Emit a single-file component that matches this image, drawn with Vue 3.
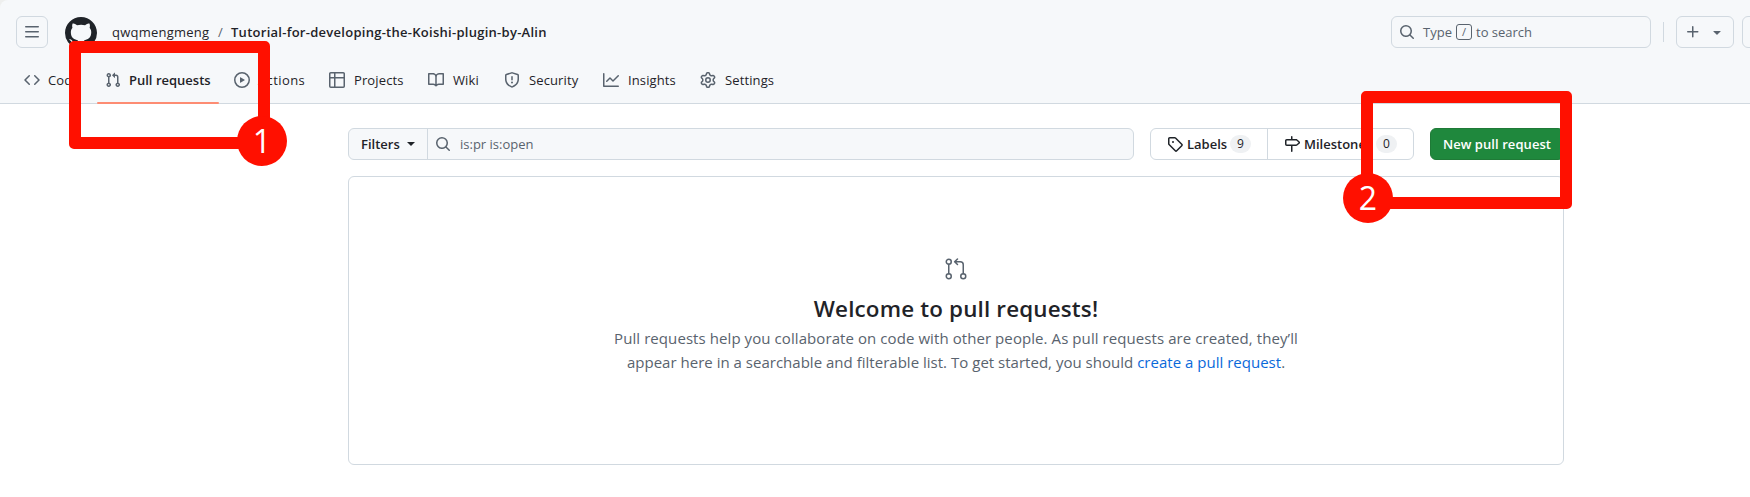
<script setup>
const tabs = [
  { key: 'code', label: 'Code' },
  { key: 'pulls', label: 'Pull requests', active: true },
  { key: 'actions', label: 'Actions' },
  { key: 'projects', label: 'Projects' },
  { key: 'wiki', label: 'Wiki' },
  { key: 'security', label: 'Security' },
  { key: 'insights', label: 'Insights' },
  { key: 'settings', label: 'Settings' },
]

const icons = {
  code: 'm11.28 3.22 4.25 4.25a.75.75 0 0 1 0 1.06l-4.25 4.25a.749.749 0 0 1-1.275-.326.749.749 0 0 1 .215-.734L13.94 8l-3.72-3.72a.749.749 0 0 1 .326-1.275.749.749 0 0 1 .734.215Zm-6.56 0a.751.751 0 0 1 1.042.018.751.751 0 0 1 .018 1.042L2.06 8l3.72 3.72a.749.749 0 0 1-.326 1.275.749.749 0 0 1-.734-.215L.47 8.53a.75.75 0 0 1 0-1.06Z',
  pulls: 'M1.5 3.25a2.25 2.25 0 1 1 3 2.122v5.256a2.251 2.251 0 1 1-1.5 0V5.372A2.25 2.25 0 0 1 1.5 3.25Zm5.677-.177L9.573.677A.25.25 0 0 1 10 .854V2.5h1A2.5 2.5 0 0 1 13.5 5v5.628a2.251 2.251 0 1 1-1.5 0V5a1 1 0 0 0-1-1h-1v1.646a.25.25 0 0 1-.427.177L7.177 3.427a.25.25 0 0 1 0-.354ZM3.75 2.5a.75.75 0 1 0 0 1.5.75.75 0 0 0 0-1.5Zm0 9.5a.75.75 0 1 0 0 1.5.75.75 0 0 0 0-1.5Zm8.25.75a.75.75 0 1 0 1.5 0 .75.75 0 0 0-1.5 0Z',
  actions: 'M8 0a8 8 0 1 1 0 16A8 8 0 0 1 8 0ZM1.5 8a6.5 6.5 0 1 0 13 0 6.5 6.5 0 0 0-13 0Zm4.879-2.773 4.264 2.559a.25.25 0 0 1 0 .428l-4.264 2.559A.25.25 0 0 1 6 10.559V5.442a.25.25 0 0 1 .379-.215Z',
  projects: 'M0 1.75C0 .784.784 0 1.75 0h12.5C15.216 0 16 .784 16 1.75v12.5A1.75 1.75 0 0 1 14.25 16H1.75A1.75 1.75 0 0 1 0 14.25ZM6.5 6.5v8h7.75a.25.25 0 0 0 .25-.25V6.5Zm8-1.5V1.75a.25.25 0 0 0-.25-.25H6.5V5Zm-13 1.5v7.75c0 .138.112.25.25.25H5v-8ZM5 5V1.5H1.75a.25.25 0 0 0-.25.25V5Z',
  wiki: 'M0 1.75A.75.75 0 0 1 .75 1h4.253c1.227 0 2.317.59 3 1.501A3.743 3.743 0 0 1 11.006 1h4.245a.75.75 0 0 1 .75.75v10.5a.75.75 0 0 1-.75.75h-4.507a2.25 2.25 0 0 0-1.591.659l-.622.621a.75.75 0 0 1-1.06 0l-.622-.621A2.25 2.25 0 0 0 5.258 13H.75a.75.75 0 0 1-.75-.75Zm7.251 10.324.004-5.073-.002-2.253A2.25 2.25 0 0 0 5.003 2.5H1.5v9h3.757a3.75 3.75 0 0 1 1.994.574ZM8.755 4.75l-.004 7.322a3.752 3.752 0 0 1 1.992-.572H14.5v-9h-3.495a2.25 2.25 0 0 0-2.25 2.25Z',
  security: 'M7.467.133a1.748 1.748 0 0 1 1.066 0l5.25 1.68A1.75 1.75 0 0 1 15 3.48V7c0 1.566-.32 3.182-1.303 4.682-.983 1.498-2.585 2.813-5.032 3.855a1.697 1.697 0 0 1-1.33 0c-2.447-1.042-4.049-2.357-5.032-3.855C1.32 10.182 1 8.566 1 7V3.48a1.75 1.75 0 0 1 1.217-1.667Zm.61 1.429a.25.25 0 0 0-.153 0l-5.25 1.68a.25.25 0 0 0-.174.238V7c0 1.358.275 2.666 1.057 3.86.784 1.194 2.121 2.34 4.366 3.297a.196.196 0 0 0 .154 0c2.245-.956 3.582-2.104 4.366-3.298C13.225 9.666 13.5 8.36 13.5 7V3.48a.251.251 0 0 0-.174-.237l-5.25-1.68ZM8.75 4.75v3a.75.75 0 0 1-1.5 0v-3a.75.75 0 0 1 1.5 0ZM9 10.5a1 1 0 1 1-2 0 1 1 0 0 1 2 0Z',
  insights: 'M1.5 1.75V13.5h13.75a.75.75 0 0 1 0 1.5H.75a.75.75 0 0 1-.75-.75V1.75a.75.75 0 0 1 1.5 0Zm14.28 2.53-5.25 5.25a.75.75 0 0 1-1.06 0L7 7.06 4.28 9.78a.751.751 0 0 1-1.042-.018.751.751 0 0 1-.018-1.042l3.25-3.25a.75.75 0 0 1 1.06 0L10 7.94l4.72-4.72a.751.751 0 0 1 1.042.018.751.751 0 0 1 .018 1.042Z',
  settings: 'M8 0a8.2 8.2 0 0 1 .701.031C9.444.095 9.99.645 10.16 1.29l.288 1.107c.018.066.079.158.212.224.231.114.454.243.668.386.123.082.233.09.299.071l1.103-.303c.644-.176 1.392.021 1.82.63.27.385.506.792.704 1.218.315.675.111 1.422-.364 1.891l-.814.806c-.049.048-.098.147-.088.294.016.257.016.515 0 .772-.01.147.038.246.088.294l.814.806c.475.469.679 1.216.364 1.891a7.977 7.977 0 0 1-.704 1.217c-.428.61-1.176.807-1.82.63l-1.102-.302c-.067-.019-.177-.011-.3.071a5.909 5.909 0 0 1-.668.386c-.133.066-.194.158-.211.224l-.29 1.106c-.168.646-.715 1.196-1.458 1.26a8.006 8.006 0 0 1-1.402 0c-.743-.064-1.289-.614-1.458-1.26l-.289-1.106c-.018-.066-.079-.158-.212-.224a5.738 5.738 0 0 1-.668-.386c-.123-.082-.233-.09-.299-.071l-1.103.303c-.644.176-1.392-.021-1.82-.63a8.12 8.12 0 0 1-.704-1.218c-.315-.675-.111-1.422.363-1.891l.815-.806c.05-.048.098-.147.088-.294a6.214 6.214 0 0 1 0-.772c.01-.147-.038-.246-.088-.294l-.815-.806C.635 6.045.431 5.298.746 4.623a7.92 7.92 0 0 1 .704-1.217c.428-.61 1.176-.807 1.82-.63l1.102.302c.067.019.177.011.3-.071.214-.143.437-.272.668-.386.133-.066.194-.158.211-.224l.29-1.106C6.009.645 6.556.095 7.299.03 7.53.01 7.764 0 8 0Zm-.571 1.525c-.036.003-.108.036-.137.146l-.289 1.105c-.147.561-.549.967-.998 1.189-.173.086-.34.183-.5.29-.417.278-.97.423-1.529.27l-1.103-.303c-.109-.03-.175.016-.195.045-.22.312-.412.644-.573.99-.014.031-.021.11.059.19l.815.806c.411.406.562.957.53 1.456a4.709 4.709 0 0 0 0 .582c.032.499-.119 1.05-.53 1.456l-.815.806c-.081.08-.073.159-.059.19.162.346.353.677.573.989.02.03.085.076.195.046l1.102-.303c.56-.153 1.113-.008 1.53.27.161.107.328.204.501.29.447.222.85.629.997 1.189l.289 1.105c.029.109.101.143.137.146a6.6 6.6 0 0 0 1.142 0c.036-.003.108-.036.137-.146l.289-1.105c.147-.561.549-.967.998-1.189.173-.086.34-.183.5-.29.417-.278.97-.423 1.529-.27l1.103.303c.109.029.175-.016.195-.045.22-.313.411-.644.573-.99.014-.031.021-.11-.059-.19l-.815-.806c-.411-.406-.562-.957-.53-1.456a4.709 4.709 0 0 0 0-.582c-.032-.499.119-1.05.53-1.456l.815-.806c.081-.08.073-.159.059-.19a6.464 6.464 0 0 0-.573-.989c-.02-.03-.085-.076-.195-.046l-1.102.303c-.56.153-1.113.008-1.53-.27a4.44 4.44 0 0 0-.501-.29c-.447-.222-.85-.629-.997-1.189l-.289-1.105c-.029-.11-.101-.143-.137-.146a6.6 6.6 0 0 0-1.142 0ZM11 8a3 3 0 1 1-6 0 3 3 0 0 1 6 0ZM9.5 8a1.5 1.5 0 1 0-3.001.001A1.5 1.5 0 0 0 9.5 8Z',
  menu: 'M1 2.75A.75.75 0 0 1 1.75 2h12.5a.75.75 0 0 1 0 1.5H1.75A.75.75 0 0 1 1 2.75Zm0 5A.75.75 0 0 1 1.75 7h12.5a.75.75 0 0 1 0 1.5H1.75A.75.75 0 0 1 1 7.75ZM1.75 12h12.5a.75.75 0 0 1 0 1.5H1.75a.75.75 0 0 1 0-1.5Z',
  mark: 'M8 0c4.42 0 8 3.58 8 8a8.013 8.013 0 0 1-5.45 7.59c-.4.08-.55-.17-.55-.38 0-.27.01-1.13.01-2.2 0-.75-.25-1.23-.54-1.48 1.78-.2 3.65-.88 3.65-3.95 0-.88-.31-1.59-.82-2.15.08-.2.36-1.02-.08-2.12 0 0-.67-.22-2.2.82-.64-.18-1.32-.27-2-.27-.68 0-1.36.09-2 .27-1.53-1.03-2.2-.82-2.2-.82-.44 1.1-.16 1.92-.08 2.12-.51.56-.82 1.28-.82 2.15 0 3.06 1.86 3.75 3.64 3.95-.23.2-.44.55-.51 1.07-.46.21-1.61.55-2.33-.66-.15-.24-.6-.83-1.23-.82-.67.01-.27.38.01.53.34.19.73.9.82 1.13.16.45.68 1.31 2.69.94 0 .67.01 1.3.01 1.49 0 .21-.15.45-.55.38A7.995 7.995 0 0 1 0 8c0-4.42 3.58-8 8-8Z',
  search: 'M10.68 11.74a6 6 0 0 1-7.922-8.982 6 6 0 0 1 8.982 7.922l3.04 3.04a.749.749 0 0 1-.326 1.275.749.749 0 0 1-.734-.215ZM11.5 7a4.499 4.499 0 1 0-8.997 0A4.499 4.499 0 0 0 11.5 7Z',
  plus: 'M7.75 2a.75.75 0 0 1 .75.75V7h4.25a.75.75 0 0 1 0 1.5H8.5v4.25a.75.75 0 0 1-1.5 0V8.5H2.75a.75.75 0 0 1 0-1.5H7V2.75A.75.75 0 0 1 7.75 2Z',
  caret: 'm4.427 7.427 3.396 3.396a.25.25 0 0 0 .354 0l3.396-3.396A.25.25 0 0 0 11.396 7H4.604a.25.25 0 0 0-.177.427Z',
  tag: 'M1 7.775V2.75C1 1.784 1.784 1 2.75 1h5.025c.464 0 .91.184 1.238.513l6.25 6.25a1.75 1.75 0 0 1 0 2.474l-5.026 5.026a1.75 1.75 0 0 1-2.474 0l-6.25-6.25A1.752 1.752 0 0 1 1 7.775Zm1.5 0c0 .066.026.13.073.177l6.25 6.25a.25.25 0 0 0 .354 0l5.025-5.025a.25.25 0 0 0 0-.354l-6.25-6.25a.25.25 0 0 0-.177-.073H2.75a.25.25 0 0 0-.25.25ZM6 5a1 1 0 1 1 0 2 1 1 0 0 1 0-2Z',
  milestone: 'M7.75 0a.75.75 0 0 1 .75.75V3h3.634c.414 0 .814.147 1.13.414l2.07 1.75a1.75 1.75 0 0 1 0 2.672l-2.07 1.75a1.75 1.75 0 0 1-1.13.414H8.5v5.25a.75.75 0 0 1-1.5 0V10H2.75A1.75 1.75 0 0 1 1 8.25v-3.5C1 3.784 1.784 3 2.75 3H7V.75A.75.75 0 0 1 7.75 0Zm4.384 8.5a.25.25 0 0 0 .161-.06l2.07-1.75a.248.248 0 0 0 0-.38l-2.07-1.75a.25.25 0 0 0-.161-.06H2.75a.25.25 0 0 0-.25.25v3.5c0 .138.112.25.25.25h9.384Z',
}
</script>

<template>
  <div class="page">
    <div class="backdrop">
      <header class="header">
        <div class="topbar">
          <button class="square"><svg class="icon" viewBox="0 0 16 16"><path :d="icons.menu" /></svg></button>
          <svg class="mark" viewBox="0 0 16 16"><path :d="icons.mark" /></svg>
          <div class="crumbs">
            <span class="owner">qwqmengmeng</span>
            <span class="slash">/</span>
            <strong class="repo">Tutorial-for-developing-the-Koishi-plugin-by-Alin</strong>
          </div>
          <div class="search">
            <svg class="icon" viewBox="0 0 16 16"><path :d="icons.search" /></svg>
            <span class="type">Type</span>
            <kbd>/</kbd>
            <span class="to">to search</span>
          </div>
          <div class="divider"></div>
          <button class="create">
            <svg class="icon" viewBox="0 0 16 16"><path :d="icons.plus" /></svg>
            <svg class="icon" viewBox="0 0 16 16"><path :d="icons.caret" /></svg>
          </button>
          <button class="square next"></button>
        </div>
        <nav class="tabs">
          <a v-for="tab in tabs" :key="tab.key" class="tab" :class="[tab.key, { active: tab.active }]">
            <svg class="icon" viewBox="0 0 16 16"><path :d="icons[tab.key]" /></svg>
            <span class="label">{{ tab.label }}</span>
          </a>
        </nav>
      </header>
    </div>

    <main class="main">
      <div class="toolbar">
        <div class="filter">
          <button class="filters"><span>Filters</span><i class="arrow"></i></button>
          <div class="query">
            <svg class="icon" viewBox="0 0 16 16"><path :d="icons.search" /></svg>
            <span>is:pr is:open</span>
          </div>
        </div>
        <div class="links">
          <a class="link"><svg class="icon" viewBox="0 0 16 16"><path :d="icons.tag" /></svg><span class="name">Labels</span><span class="count">9</span></a>
          <a class="link stones"><svg class="icon" viewBox="0 0 16 16"><path :d="icons.milestone" /></svg><span class="name">Milestones</span><span class="count">0</span></a>
        </div>
        <button class="primary"><span>New pull request</span></button>
      </div>
      <section class="blank">
        <svg class="big" viewBox="0 0 24 24" fill="none" stroke="currentColor" stroke-width="1.5" stroke-linecap="round" stroke-linejoin="round">
          <circle cx="4.75" cy="4.75" r="2.5" /><circle cx="4.75" cy="19.25" r="2.5" /><circle cx="19.25" cy="19.25" r="2.5" />
          <path d="M4.75 7.25v9.5M19.25 16.75V7.75a3 3 0 0 0-3-3H11M13.5 2 10.6 4.75l2.9 2.75" />
        </svg>
        <h2>Welcome to pull requests!</h2>
        <p><span class="line1">Pull requests help you collaborate on code with other people. As pull requests are created, they’ll</span><br /><span class="line2">appear here in a searchable and filterable list. To get started, you should <a>create a pull request</a>.</span></p>
      </section>
    </main>

    <div class="callout one"><span class="badge">1</span></div>
    <div class="callout two"><span class="badge">2</span></div>
  </div>
</template>

<style>
body { margin: 0; }
</style>

<style scoped>
.page {
  position: relative;
  width: 1750px;
  height: 497px;
  overflow: hidden;
  background: #fff;
  color: #1f2328;
  font: 13px/20px "Open Sans", "Noto Sans", sans-serif;
}
.page * { box-sizing: border-box; }
span, strong, h2, p { white-space: nowrap; }
button { padding: 0; margin: 0; font: inherit; color: inherit; background: none; }
.icon { display: block; flex: none; width: 16px; height: 16px; fill: currentColor; }
.backdrop { background: #eeefee; }
.header {
  height: 104px;
  background: #f6f8fa;
  border-bottom: 1px solid #d1d9e0;
  border-top-left-radius: 8px;
  color: #59636e;
}
.topbar { display: flex; align-items: center; height: 64px; padding-left: 16px; }
.square {
  flex: none;
  display: grid;
  place-items: center;
  width: 32px;
  height: 32px;
  border: 1px solid #d1d9e0;
  border-radius: 6px;
}
.mark { flex: none; width: 32px; height: 32px; margin-left: 17px; fill: #1f2328; margin-top: 2px; }
.crumbs { display: flex; flex: 1; margin-left: 15px; color: #1f2328; }
.owner { width: 106px; letter-spacing: 0.24px; }
.slash { width: 13px; color: #59636e; }
.repo { font-weight: 600; letter-spacing: 0.27px; }
.search {
  display: flex;
  align-items: center;
  width: 260px;
  height: 32px;
  padding-left: 7px;
  border: 1px solid #d1d9e0;
  border-radius: 6px;
}
.type { width: 33px; margin-left: 8px; }
kbd {
  width: 16px;
  height: 16px;
  border: 1px solid #59636e;
  border-radius: 3px;
  font: 11px/14px "Open Sans", sans-serif;
  text-align: center;
}
.to { margin-left: 4px; }
.divider { width: 1px; height: 20px; margin: 0 12px; background: #d1d9e0; }
.create {
  display: flex;
  align-items: center;
  gap: 8px;
  width: 58px;
  height: 32px;
  padding-left: 8px;
  border: 1px solid #d1d9e0;
  border-radius: 6px;
}
.next { margin-left: 8px; margin-right: -24px; }
.tabs { display: flex; gap: 8px; height: 40px; padding-left: 16px; }
.tab { position: relative; display: flex; gap: 8px; height: 32px; padding: 0 8px; align-items: center; }
.label { width: 51px; padding-left: 1px; color: #1f2328; letter-spacing: 0.12px; }
.code .label { width: 33px; padding-left: 0; }
.pulls .label { width: 81px; padding-left: 0; letter-spacing: 0; }
.actions .label { width: 47px; padding-left: 0; letter-spacing: 0.4px; }
.wiki .label { width: 28px; }
.insights .label { width: 49px; }
.active .label { font-weight: 600; }
.active::after {
  content: "";
  position: absolute;
  left: 0;
  right: -1px;
  top: 38px;
  height: 2px;
  border-radius: 1px;
  background: #fd8c73;
}
.main { width: 1216px; margin: 24px 0 0 348px; }
.toolbar { display: flex; gap: 16px; font-weight: 600; }
.toolbar > * { height: 32px; border-radius: 6px; }
.filter { display: flex; width: 786px; border: 1px solid #d1d9e0; background: #f6f8fa; }
.filters {
  display: flex;
  align-items: center;
  width: 79px;
  padding-left: 12px;
  border: 0;
  border-right: 1px solid #d1d9e0;
}
.filters span { width: 46px; text-align: left; }
.arrow { border: 4px solid transparent; border-top-color: #1f2328; border-bottom: 0; }
.query { display: flex; align-items: center; padding-left: 7px; color: #59636e; font-weight: 400; gap: 9px; }
.links { display: flex; width: 264px; border: 1px solid #d1d9e0; }
.link { display: flex; align-items: center; width: 117px; padding-left: 16px; border-right: 1px solid #d1d9e0; }
.name { width: 43px; margin-left: 4px; }
.stones { width: 145px; border: 0; }
.stones .name { width: 72px; }
.count {
  width: 21px;
  height: 18px;
  border-radius: 9px;
  background: #eff1f3;
  font: 12px/18px "Open Sans", sans-serif;
  text-align: center;
}
.primary { width: 134px; border: 1px solid #1f7a37; background: #1f883d; color: #fff; font-weight: 600; letter-spacing: 0.07px; }
.blank {
  display: flex;
  flex-direction: column;
  align-items: center;
  height: 289px;
  margin-top: 16px;
  padding-top: 80px;
  border: 1px solid #d1d9e0;
  border-radius: 6px;
  color: #59636e;
}
.big { width: 24px; height: 24px; flex: none; }
h2 { margin: 10px 0 0; font-size: 22.4px; line-height: 36px; font-weight: 600; letter-spacing: 0.16px; color: #1f2328; }
p { margin: -1px 0 0; font-size: 15px; line-height: 24px; text-align: center; }
.line1 { letter-spacing: 0.078px; }
.line2 { letter-spacing: 0.015px; }
p a { color: #0969da; }
.callout { position: absolute; border: 12px solid #ff1000; border-radius: 5px; }
.one { left: 69px; top: 41px; width: 201px; height: 108px; }
.two { left: 1361px; top: 91px; width: 211px; height: 118px; }
.badge {
  position: absolute;
  width: 50px;
  height: 50px;
  border-radius: 50%;
  background: #ff1000;
  color: #fff;
  font-size: 32px;
  line-height: 50px;
  text-align: center;
}
.one .badge { left: 156px; top: 63px; }
.two .badge { left: -30px; top: 70px; }
</style>
